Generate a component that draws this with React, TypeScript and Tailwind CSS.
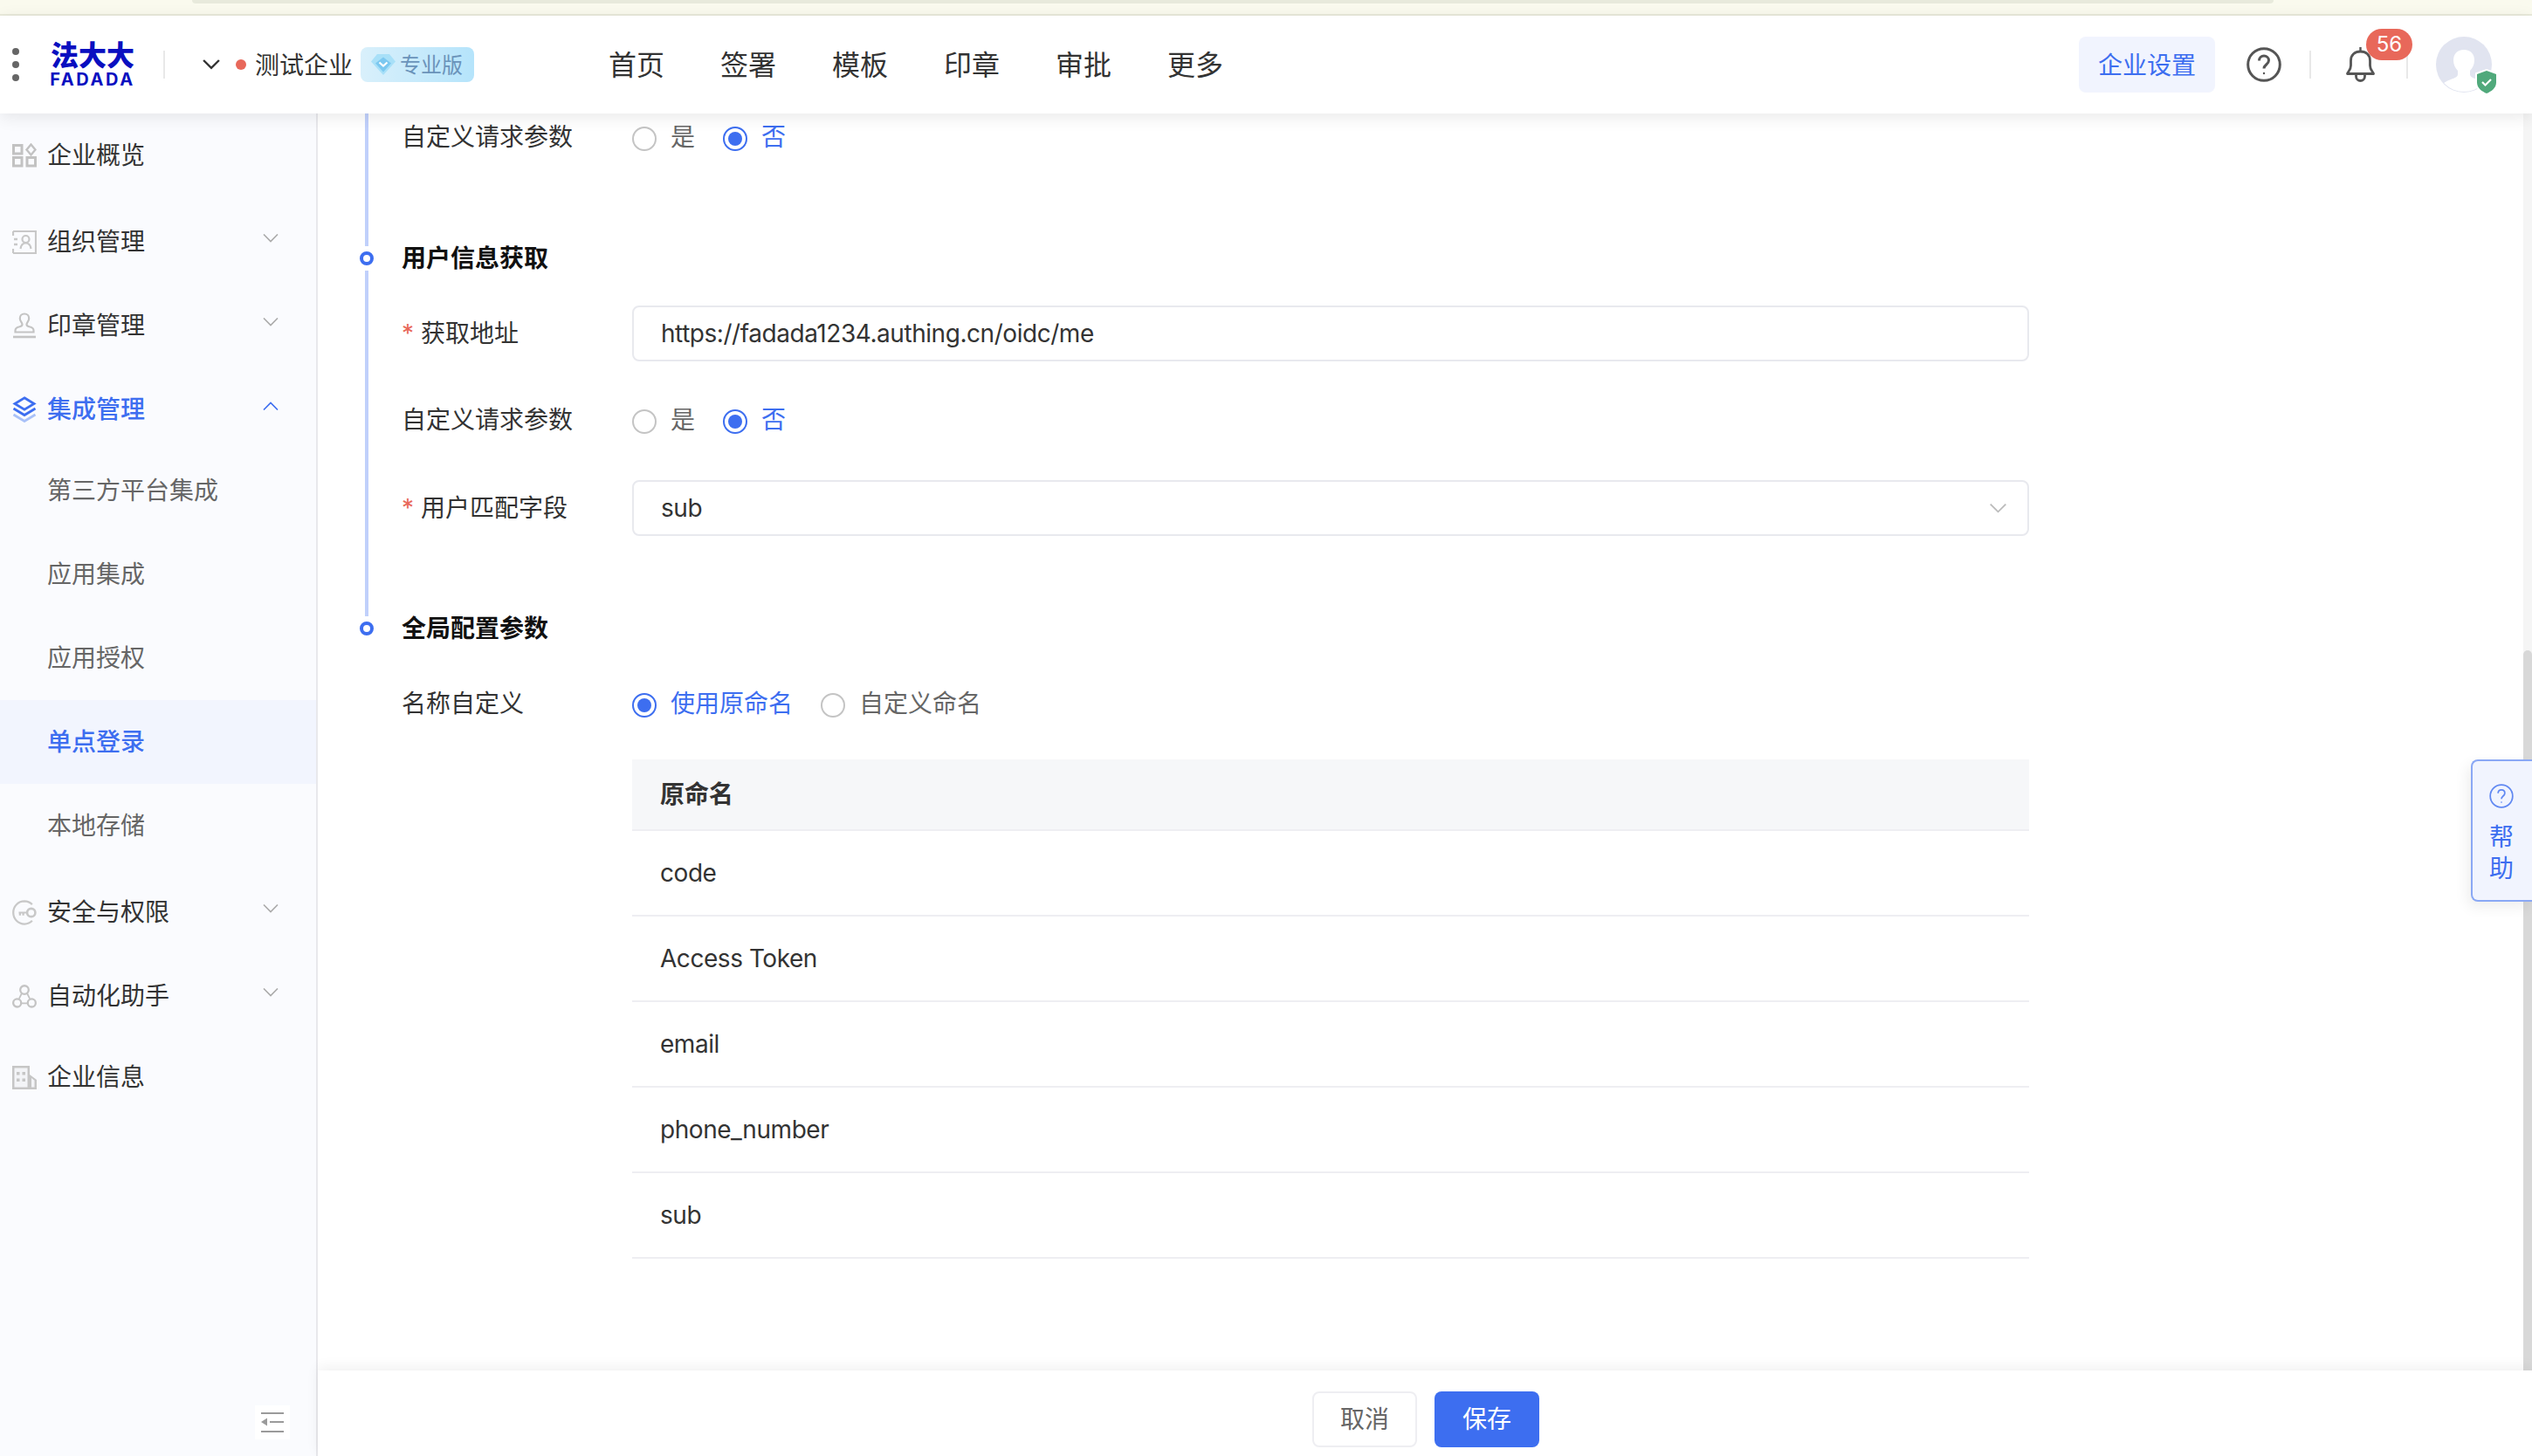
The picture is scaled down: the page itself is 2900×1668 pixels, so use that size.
const navItems = ['首页', '签署', '模板', '印章', '审批', '更多']

function Chevron({ up, className }: { up?: boolean; className?: string }) {
  return (
    <svg viewBox="0 0 18 10" fill="none" stroke="currentColor" strokeWidth="1.6" className={className}>
      <path d={up ? 'M1 9.5 9 1.5l8 8' : 'M1 .5l8 8 8-8'} />
    </svg>
  )
}

function OverviewIcon() {
  return (
    <svg viewBox="0 0 28 28" fill="none" stroke="#c2c2c2" strokeWidth="3" className="h-7 w-7">
      <rect x="1.5" y="2.5" width="9.5" height="9.5" />
      <path d="M21.5 1.5l5 6-5 6-5-6z" strokeWidth="2.4" />
      <rect x="1.5" y="16.5" width="9.5" height="9.5" />
      <rect x="17" y="16.5" width="9.5" height="9.5" />
    </svg>
  )
}

function OrgIcon() {
  return (
    <svg viewBox="0 0 28 28" fill="none" stroke="#c8c8c8" strokeWidth="2.2" className="h-7 w-7">
      <path d="M1 2h26v25H1" />
      <path d="M1 2v5M1 22v5" />
      <path d="M2 11h4M2 17h4" strokeWidth="2.6" />
      <circle cx="15.5" cy="11" r="4" />
      <path d="M9.5 22c.6-4.5 3-6.5 6-6.5s5.400 2 6 6.500" />
    </svg>
  )
}

function SealIcon() {
  return (
    <svg viewBox="0 0 28 30" fill="none" stroke="#c4c4c4" strokeWidth="2.200" className="h-[30px] w-7">
      <path d="M14 1.500c-3.200 0-5.200 2.400-5.200 5.300 0 3.300 2.700 4.700 2.700 7 0 1.300-1 2-3 2.500-3 .7-5 1.300-5 4.200v2h21v-2c0-2.900-2-3.500-5-4.200-2-.5-3-1.200-3-2.500 0-2.300 2.700-3.700 2.700-7 0-2.900-2-5.300-5.200-5.300z" />
      <path d="M1 28h26" strokeWidth="2.600" />
    </svg>
  )
}

function LayersIcon() {
  return (
    <svg viewBox="0 0 28 30" fill="none" strokeWidth="2.800" className="h-[30px] w-7">
      <path d="M14 1.800 25 8.500l-11 6.700L3 8.500z" stroke="#3d6ef0" />
      <path d="M1.500 14l12.500 7.500L26.500 14" stroke="#3d6ef0" />
      <path d="M1.500 21l12.500 7.500L26.500 21" stroke="#a9c1f8" />
    </svg>
  )
}

function KeyIcon() {
  return (
    <svg viewBox="0 0 30 31" fill="none" stroke="#c8c8c8" strokeWidth="2.400" className="h-[31px] w-[30px]">
      <path d="M24.500 5.500A14.200 14.200 0 0 0 15 1.500C7.300 1.500 1.300 7.700 1.300 15.500S7.300 29.500 15 29.500c3.600 0 7-1.400 9.500-4" />
      <circle cx="23.300" cy="15.500" r="5" strokeWidth="2.800" />
      <path d="M8 15.500h10M9.500 15.500v3.500M13.500 15.500v3.500" strokeWidth="2.400" />
    </svg>
  )
}

function FlowIcon() {
  return (
    <svg viewBox="0 0 32 31" fill="none" stroke="#c4c4c4" strokeWidth="2.600" className="h-[31px] w-8">
      <circle cx="16" cy="7" r="5.500" />
      <circle cx="6.500" cy="24" r="5.200" />
      <circle cx="25.500" cy="24" r="5.200" />
      <path d="M12.500 11.500 9 18.500M19.500 11.500 23 18.500M12 24.500h8" strokeWidth="2" />
    </svg>
  )
}

function BuildingIcon() {
  return (
    <svg viewBox="0 0 28 27" className="h-[27px] w-7">
      <path d="M0 0h20v27H0zM20 10l8 6v11h-8z" fill="#c6c6c6" />
      <path d="M2.500 2.500h15v22h-15zM22 14l3.500 2.800v7.700H22z" fill="#f3f4f7" />
      <path d="M5 7h3.500v3.500H5zM11.500 7H15v3.500h-3.500zM5 14.500h3.500V18H5zM11.500 14.500H15V18h-3.500z" fill="#c6c6c6" />
    </svg>
  )
}

function CollapseIcon() {
  return (
    <svg viewBox="0 0 26 23" className="h-[23px] w-[26px]">
      <path d="M0 0h26v2H0zM10 10h16v2H10zM0 21h26v2H0z" fill="#9a9a9a" />
      <path d="M7 6.500v9L0 11z" fill="#9a9a9a" />
    </svg>
  )
}

function GemIcon() {
  return (
    <svg viewBox="0 0 28 24" className="h-6 w-7">
      <path d="M7 0h14l7 8.500L14 24 0 8.500z" fill="#a8e0f8" />
      <path d="M14 3.500l9 7-9 10-9-10z" fill="#7cc8f0" />
      <path d="M9.500 9.500 14 13.500l4.500-4" fill="none" stroke="#fff" strokeWidth="2.200" />
    </svg>
  )
}

function HelpIcon({ className, strokeWidth }: { className: string; strokeWidth: string }) {
  return (
    <svg viewBox="0 0 40 40" fill="none" stroke="currentColor" strokeWidth={strokeWidth} className={className}>
      <circle cx="20" cy="20" r="18.300" />
      <path d="M14.500 15.500c0-3.300 2.400-5.500 5.500-5.500s5.500 2.200 5.500 5.200c0 4.800-5.500 4.800-5.500 9.300" />
      <circle cx="20" cy="30" r="1.200" fill="currentColor" stroke="none" />
    </svg>
  )
}

function BellIcon() {
  return (
    <svg viewBox="0 0 33 40" fill="none" stroke="#555" strokeWidth="2.800" className="h-10 w-[33px]">
      <path d="M16.500 0v5" strokeWidth="2.400" />
      <path d="M1.500 30.500c.3-2 4-3.500 4-9.500v-5.500c0-6.500 4.500-10.500 11-10.500s11 4 11 10.500V21c0 6 3.700 7.500 4 9.500z" strokeLinejoin="round" />
      <path d="M11.500 31v2.500a5 5 0 0 0 10 0V31" />
    </svg>
  )
}

function Avatar() {
  return (
    <div className="relative h-16 w-16">
      <svg viewBox="0 0 64 64" className="h-16 w-16">
        <defs>
          <clipPath id="avatar-clip">
            <circle cx="32" cy="32" r="31" />
          </clipPath>
        </defs>
        <circle cx="32" cy="32" r="32" fill="#e1e4f0" />
        <g clipPath="url(#avatar-clip)">
          <path d="M32 15c-8 0-12 5-12 12 0 5 2 9 5 12v4c0 3-3 4-8 6-5 2-10 4-12 10v6h54v-6c-2-6-7-8-12-10-5-2-8-3-8-6v-4c3-3 5-7 5-12 0-7-4-12-12-12z" fill="#fff" />
        </g>
      </svg>
      <svg viewBox="0 0 26 30" className="absolute -bottom-[3px] -right-[7px] h-[30px] w-[26px]">
        <path d="M13 0 26 4.500v11C26 23 19 27.500 13 30 7 27.500 0 23 0 15.500v-11z" fill="#fff" />
        <path d="M13 2 24 6v9.500c0 6.500-6 10.500-11 12.500C8 26 2 22 2 15.500V6z" fill="#50a97b" />
        <path d="M8 15l3.500 3.500L18 12" fill="none" stroke="#fff" strokeWidth="2.200" />
      </svg>
    </div>
  )
}

function Radio({ checked, label }: { checked?: boolean; label: string }) {
  return (
    <div className="flex items-center gap-4">
      {checked ? (
        <span className="mt-1 flex h-7 w-7 items-center justify-center rounded-full border-2 border-[#3d6ef0]">
          <span className="h-4 w-4 rounded-full bg-[#3d6ef0]" />
        </span>
      ) : (
        <span className="mt-1 h-7 w-7 rounded-full border-2 border-[#c4c4c4]" />
      )}
      <span className={checked ? 'text-[#3d6ef0]' : 'text-[#666]'}>{label}</span>
    </div>
  )
}

function Label({ required, text }: { required?: boolean; text: string }) {
  return (
    <div className="flex w-[264px] shrink-0 items-center text-[#333]">
      {required && <span className="w-[22px] text-[#e8685a]">*</span>}
      {text}
    </div>
  )
}

function YesNoRow() {
  return (
    <div className="flex h-[54px] items-center">
      <Label text="自定义请求参数" />
      <div className="flex gap-8">
        <Radio label="是" />
        <Radio checked label="否" />
      </div>
    </div>
  )
}

function Heading({ text, className }: { text: string; className: string }) {
  return <div className={`flex h-11 items-center font-bold text-[#111] ${className}`}>{text}</div>
}

function SideRow({
  icon,
  text,
  active,
  chevron,
  className,
}: {
  icon: React.ReactNode
  text: string
  active?: boolean
  chevron?: 'up' | 'down'
  className?: string
}) {
  return (
    <div className={`relative flex h-24 items-center pl-[54px] ${active ? 'font-medium text-[#3d6ef0]' : 'text-[#333]'} ${className ?? ''}`}>
      <span className="absolute left-[14px] flex w-7 items-center justify-center">{icon}</span>
      {text}
      {chevron && (
        <Chevron
          up={chevron === 'up'}
          className={`absolute left-[301px] top-[39px] h-[10px] w-[18px] ${active ? 'text-[#3d6ef0]' : 'text-[#aaa]'}`}
        />
      )}
    </div>
  )
}

function SubRow({ text, active, className }: { text: string; active?: boolean; className?: string }) {
  return (
    <div className={`flex h-24 items-center pl-[54px] ${active ? 'bg-[#f2f5fe] font-medium text-[#3d6ef0]' : 'text-[#666]'} ${className ?? ''}`}>
      {text}
    </div>
  )
}

export default function App() {
  return (
    <div className="relative flex h-[1668px] w-[2900px] flex-col overflow-hidden bg-white text-[28px] leading-none [font-family:Inter,'Noto_Sans_CJK_SC',sans-serif]">
      {/* browser strip */}
      <div className="h-[18px] shrink-0 border-b-2 border-[#e9eadb] bg-[#fafaee] pl-[220px]">
        <div className="h-1 w-[2384px] rounded-b-lg bg-[#e8eadc]" />
      </div>

      {/* Header */}
      <header className="relative z-10 flex h-[112px] shrink-0 items-center bg-white shadow-[0_4px_18px_rgba(0,0,0,0.09)]">
        <div className="ml-[14px] flex flex-col gap-[7px]">
          <span className="h-2 w-2 rounded-full bg-[#666]" />
          <span className="h-2 w-2 rounded-full bg-[#666]" />
          <span className="h-2 w-2 rounded-full bg-[#666]" />
        </div>
        <div className="ml-9 flex w-24 flex-col items-center text-[#0a0fc0]">
          <span className="text-[32px] font-black leading-[32px]">法大大</span>
          <span className="mt-[2px] text-[20px] font-bold leading-[18px] tracking-[2.6px]">FADADA</span>
        </div>
        <span className="ml-[33px] h-8 w-[2px] bg-[#e8e8e8]" />
        <Chevron className="ml-[43px] h-3 w-5 text-[#333] [&_path]:[stroke-width:2.2]" />
        <span className="ml-[18px] h-3 w-3 rounded-full bg-[#e8685a]" />
        <span className="ml-[10px] mt-[2px] text-[#333]">测试企业</span>
        <div className="ml-[9px] flex h-10 w-[130px] items-center gap-[6px] rounded-lg bg-gradient-to-r from-[#d9f0fb] to-[#b5e4fb] pl-3 text-2xl text-[#6a93ba]">
          <GemIcon />
          <span className="-ml-px mt-px">专业版</span>
        </div>
        <nav className="ml-[154px] mt-[2px] flex gap-16 text-[32px] text-[#333]">
          {navItems.map((item) => (
            <span key={item}>{item}</span>
          ))}
        </nav>

        <div className="ml-auto flex h-16 w-[156px] items-center justify-center rounded-lg bg-[#f1f4fe] pt-[2px] text-[#3d6ef0]">企业设置</div>
        <div className="ml-9 text-[#555]">
          <HelpIcon className="h-10 w-10" strokeWidth="3" />
        </div>
        <span className="ml-8 h-8 w-[2px] bg-[#e8e8e8]" />
        <div className="relative ml-10">
          <BellIcon />
          <span className="absolute -top-[21px] left-[23px] flex h-9 w-[53px] items-center justify-center rounded-full bg-[#e8685a] text-2xl text-white">56</span>
        </div>
        <span className="ml-[36px] h-8 w-[2px] bg-[#e8e8e8]" />
        <div className="ml-[32px] mr-[46px]">
          <Avatar />
        </div>
      </header>

      <div className="flex min-h-0 flex-1">
        {/* Sidebar */}
        <aside className="relative w-[364px] shrink-0 border-r-2 border-[#e8e8ec] bg-[#fafbfe]">
          <SideRow icon={<OverviewIcon />} text="企业概览" />
          <SideRow icon={<OrgIcon />} text="组织管理" chevron="down" className="mt-[3px]" />
          <SideRow icon={<SealIcon />} text="印章管理" chevron="down" />
          <SideRow icon={<LayersIcon />} text="集成管理" chevron="up" active />
          <SubRow text="第三方平台集成" className="-mt-[3px]" />
          <SubRow text="应用集成" />
          <SubRow text="应用授权" />
          <SubRow text="单点登录" active />
          <SubRow text="本地存储" />
          <SideRow icon={<KeyIcon />} text="安全与权限" chevron="down" className="mt-[3px]" />
          <SideRow icon={<FlowIcon />} text="自动化助手" chevron="down" />
          <SideRow icon={<BuildingIcon />} text="企业信息" className="-mt-[3px]" />
          <div className="absolute bottom-[19px] left-[292px] flex h-[39px] w-10 items-center justify-center bg-white">
            <CollapseIcon />
          </div>
        </aside>

        {/* Main */}
        <main className="flex min-w-0 flex-1 flex-col">
          <div className="flex min-h-0 flex-1">
            <div className="flex min-w-0 flex-1 pl-12">
              {/* timeline rail */}
              <div className="flex w-4 shrink-0 flex-col items-center">
                <span className="h-[152px] w-1 bg-[#c0d0fb]" />
                <span className="my-[6px] h-4 w-4 rounded-full border-4 border-[#3d6ef0]" />
                <span className="h-[396px] w-1 bg-[#c0d0fb]" />
                <span className="mt-[6px] h-4 w-4 rounded-full border-4 border-[#3d6ef0]" />
              </div>

              <div className="ml-8 w-[1864px]">
                <YesNoRow />
                <Heading text="用户信息获取" className="mt-[90px]" />
                <div className="mt-8 flex items-center">
                  <Label required text="获取地址" />
                  <div className="flex h-16 w-[1600px] items-center rounded-lg border-2 border-[#e8e9ee] pl-[31px] tracking-[-0.45px] text-[#333]">
                    https://fadada1234.authing.cn/oidc/me
                  </div>
                </div>
                <div className="mt-[40px]">
                  <YesNoRow />
                </div>
                <div className="mt-[42px] flex items-center">
                  <Label required text="用户匹配字段" />
                  <div className="flex h-16 w-[1600px] items-center justify-between rounded-lg border-2 border-[#e8e9ee] pl-[31px] pr-[23px] tracking-[-0.45px] text-[#333]">
                    sub
                    <Chevron className="h-[11px] w-[21px] text-[#bbb]" />
                  </div>
                </div>
                <Heading text="全局配置参数" className="mt-[84px]" />
                <div className="mt-[37px] flex h-[54px] items-center">
                  <Label text="名称自定义" />
                  <div className="flex gap-8">
                    <Radio checked label="使用原命名" />
                    <Radio label="自定义命名" />
                  </div>
                </div>
                <div className="ml-[264px] mt-[37px] w-[1600px] text-[#333]">
                  <div className="flex h-[82px] items-center border-b-2 border-[#eeeef2] bg-[#f6f7f9] pl-8 font-bold">原命名</div>
                  {['code', 'Access Token', 'email', 'phone_number', 'sub'].map((name) => (
                    <div key={name} className="flex h-[98px] items-center border-b-2 border-[#eeeef2] pl-8 tracking-[-0.45px]">
                      {name}
                    </div>
                  ))}
                </div>
              </div>
            </div>
            {/* scrollbar */}
            <div className="flex w-[10px] shrink-0 flex-col bg-[#f5f5f5] pt-[615px]">
              <div className="flex-1 rounded-t-full bg-[#d8d8d8]" />
            </div>
          </div>

          <footer className="relative flex h-[98px] shrink-0 justify-center gap-5 bg-white pl-[2px] pt-6 shadow-[0_-4px_14px_rgba(0,0,0,0.06)]">
            <div className="flex h-16 w-[120px] items-center justify-center rounded-lg border-2 border-[#eeeef2] bg-white text-[#666]">取消</div>
            <div className="flex h-16 w-[120px] items-center justify-center rounded-lg bg-[#3d6ef0] text-white">保存</div>
          </footer>
        </main>
      </div>

      {/* help tab */}
      <div className="absolute right-0 top-[870px] z-10 flex h-[163px] w-[70px] flex-col items-center rounded-l-lg border-2 border-r-0 border-[#8aa8f5] bg-[#f1f4fe] pr-[2px] pt-[26px] text-[#3d6ef0] shadow-[-4px_6px_16px_rgba(0,0,0,0.07)]">
        <HelpIcon className="h-7 w-7 opacity-80" strokeWidth="2.500" />
        <span className="mt-[19px]">帮</span>
        <span className="mt-2">助</span>
      </div>
    </div>
  )
}
